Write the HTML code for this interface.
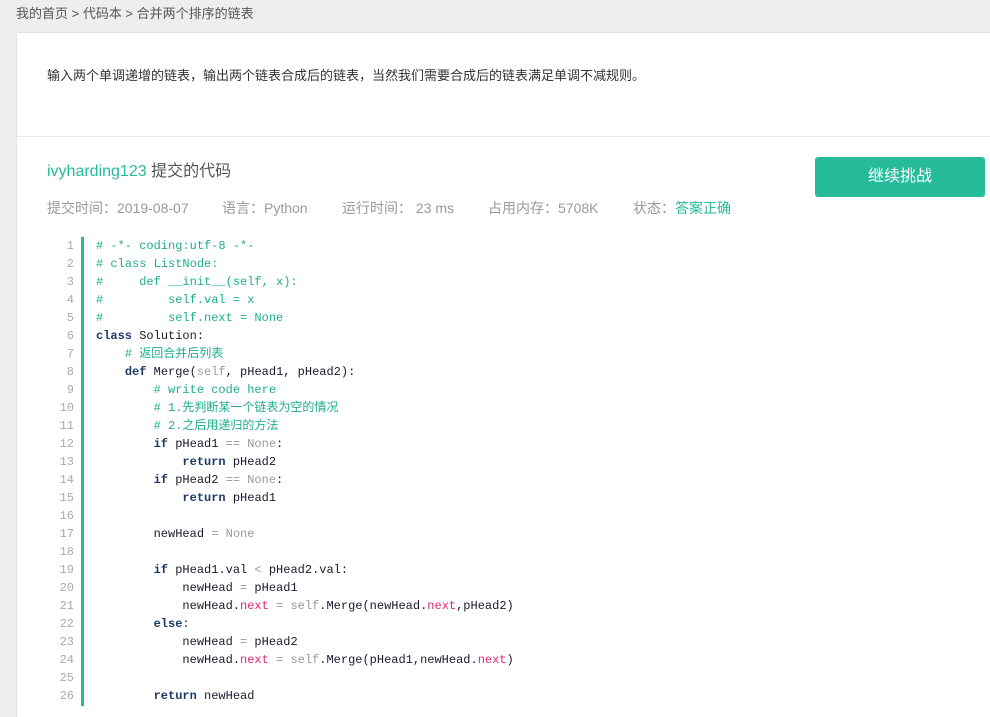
<!DOCTYPE html>
<html><head><meta charset="utf-8"><style>
html,body{margin:0;background:#eeeeee;width:990px;height:717px;overflow:hidden;font-family:"Liberation Sans","Noto Sans CJK SC",sans-serif;position:relative;}
.bc{position:absolute;left:16px;top:3px;font-size:13px;color:#555;}
.card{position:absolute;left:16px;top:32px;width:990px;height:700px;background:#fff;border:1px solid #e2e2e2;border-bottom:none;border-radius:3px 3px 0 0;}
.desc{position:absolute;left:47px;top:65px;font-size:13px;color:#333;}
.hr{position:absolute;left:17px;top:136px;width:980px;height:1px;background:#e8e8e8;}
.t{position:absolute;left:47px;top:157px;font-size:16px;color:#555;}
.t span{color:#25bb9b;}
.meta{position:absolute;top:198px;font-size:14px;color:#999;}
.btn{position:absolute;left:815px;top:157px;width:170px;height:40px;background:#25bb9b;border-radius:3px;color:#fff;font-size:16px;text-align:center;line-height:40px;}
.gut{position:absolute;left:40px;top:237px;width:34px;text-align:right;font:12px/18px "Liberation Mono",monospace;color:#aaa;}
.bar{position:absolute;left:81px;top:237px;width:3px;height:469px;background:#25bb9b;}
pre{position:absolute;left:96px;top:237px;margin:0;font:12px/18px "Liberation Mono","Noto Sans CJK SC",monospace;color:#1a1a2e;}
.c{color:#1fae8f}.k{color:#1b3a66;font-weight:bold}.g{color:#999}.p{color:#e0267a}
</style></head><body>
<div class="bc">我的首页 &gt; 代码本 &gt; 合并两个排序的链表</div>
<div class="card"></div>
<div class="desc">输入两个单调递增的链表，输出两个链表合成后的链表，当然我们需要合成后的链表满足单调不减规则。</div>
<div class="hr"></div>
<div class="t"><span>ivyharding123</span> 提交的代码</div>
<div class="meta" style="left:47px">提交时间：2019-08-07</div>
<div class="meta" style="left:222px">语言：Python</div>
<div class="meta" style="left:342px">运行时间： 23 ms</div>
<div class="meta" style="left:488px">占用内存：5708K</div>
<div class="meta" style="left:633px">状态：<span style="color:#25bb9b">答案正确</span></div>
<div class="btn">继续挑战</div>
<div class="gut">1<br>2<br>3<br>4<br>5<br>6<br>7<br>8<br>9<br>10<br>11<br>12<br>13<br>14<br>15<br>16<br>17<br>18<br>19<br>20<br>21<br>22<br>23<br>24<br>25<br>26</div>
<div class="bar"></div>
<pre><span class="c"># -*- coding:utf-8 -*-</span>
<span class="c"># class ListNode:</span>
<span class="c">#     def __init__(self, x):</span>
<span class="c">#         self.val = x</span>
<span class="c">#         self.next = None</span>
<span class="k">class</span> Solution:
    <span class="c"># 返回合并后列表</span>
    <span class="k">def</span> Merge(<span class="g">self</span>, pHead1, pHead2):
        <span class="c"># write code here</span>
        <span class="c"># 1.先判断某一个链表为空的情况</span>
        <span class="c"># 2.之后用递归的方法</span>
        <span class="k">if</span> pHead1 <span class="g">==</span> <span class="g">None</span>:
            <span class="k">return</span> pHead2
        <span class="k">if</span> pHead2 <span class="g">==</span> <span class="g">None</span>:
            <span class="k">return</span> pHead1

        newHead <span class="g">=</span> <span class="g">None</span>

        <span class="k">if</span> pHead1.val <span class="g">&lt;</span> pHead2.val:
            newHead <span class="g">=</span> pHead1
            newHead.<span class="p">next</span> <span class="g">=</span> <span class="g">self</span>.Merge(newHead.<span class="p">next</span>,pHead2)
        <span class="k">else</span>:
            newHead <span class="g">=</span> pHead2
            newHead.<span class="p">next</span> <span class="g">=</span> <span class="g">self</span>.Merge(pHead1,newHead.<span class="p">next</span>)

        <span class="k">return</span> newHead</pre>
</body></html>
